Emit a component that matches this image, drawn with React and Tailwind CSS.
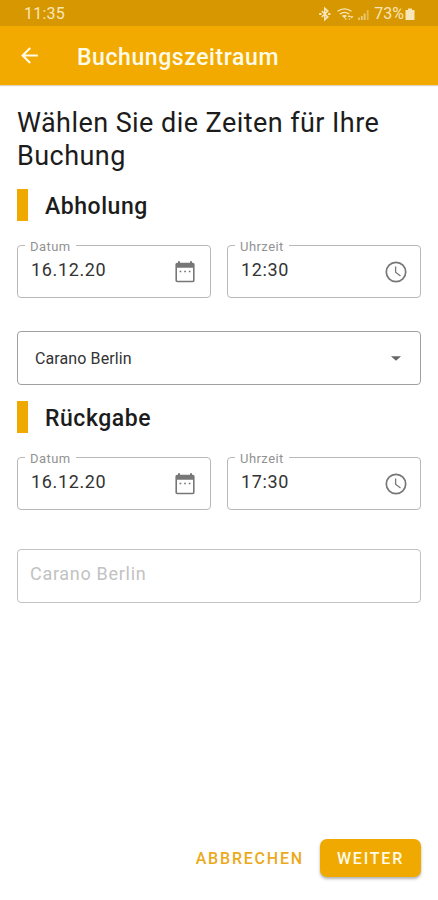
const INK = 'text-[#333]';

function BackArrow() {
  return (
    <svg className="h-[25px] w-[25px] fill-[#fffbe9]" viewBox="0 0 24 24">
      <path d="M20 11H7.83l5.59-5.59L12 4l-8 8 8 8 1.41-1.41L7.83 13H20v-2z" />
    </svg>
  );
}

function Calendar() {
  return (
    <svg className="mr-[1px] h-[24px] w-[22px]" viewBox="0 0 22 24">
      <path fill="#777" fillRule="evenodd" d="M4 1.200h2v1.500h10V1.200h2v1.500h.8A1.800 1.800 0 0 1 20.600 4.500v16a1.800 1.800 0 0 1-1.800 1.800H3.200a1.800 1.800 0 0 1-1.800-1.800v-16a1.800 1.800 0 0 1 1.800-1.800H4zM3 7.800v12.500a.4.400 0 0 0 .4.4h15.200a.4.400 0 0 0 .4-.4V7.800z" />
      <path fill="#777" d="M5.600 10.700h1.700v1.500H5.600zM10.200 10.700h1.700v1.500h-1.700zM14.800 10.700h1.700v1.500h-1.700z" />
    </svg>
  );
}

function Clock() {
  return (
    <svg className="-mr-[1px] h-[24px] w-[24px]" viewBox="0 0 24 24" fill="none" stroke="#777" strokeWidth="1.700">
      <circle cx="12" cy="12" r="9.700" />
      <path d="M11.600 6.500v5.700l4.900 3.700" strokeWidth="1.300" />
    </svg>
  );
}

function StatusIcons() {
  return (
    <svg className="h-[16px] w-[54px]" viewBox="0 0 54 16" fill="none" stroke="#f8e6b8">
      <path strokeWidth="1.600" d="M3.800 5l6 6-3 2.700V2.300l3 2.700-6 6" />
      <path strokeWidth="2" d="M1.200 8h2.300M10.100 8h2.300" />
      <path strokeWidth="1.300" d="M19.500 5.300q7-5 14 0M21.800 8q4.700-3.300 9.400 0" />
      <path fill="#f8e6b8" stroke="none" d="M23.800 9.800q2.700-1.500 5.200 0L26.500 12.300zM29.500 11l1.600-2 1.600 2zM32 10.200h3.500l-1.700 2.200zM26.500 12.500h2.500l-1.200 1.500zM30.500 12.500h2l-1 1.500z" />
      <path strokeWidth="1.800" opacity=".65" d="M41 14v-2.500M43.800 14v-4M46.600 14V7.500" />
      <path strokeWidth="1.800" opacity=".45" d="M49.700 14V4" />
    </svg>
  );
}

function Field({ label, value, icon }) {
  return (
    <fieldset className="h-[59px] min-w-0 flex-1 rounded-[4px] border border-[#b8b8b8] pl-[13px] pr-[13px]">
      <legend className="ml-[-6px] h-[12px] pl-[5px] pr-[5px] text-[13px] leading-[16px] tracking-[0.45px] text-[#929292]">{label}</legend>
      <div className="flex items-start justify-between">
        <span className={`mt-[7px] text-[18px] leading-[24px] tracking-[0.65px] ${INK}`}>{value}</span>
        <span className="mt-[9px]">{icon}</span>
      </div>
    </fieldset>
  );
}

function Section({ title, date, time, children }) {
  return (
    <section className="h-[212px]">
      <div className="flex h-[32px] items-center gap-[17px]">
        <span className="h-[32px] w-[11px] bg-[#f0a900]" />
        <h2 className="pt-[4px] text-[23px] font-medium leading-[32px] tracking-[0.55px] text-[#1c1c1c]">{title}</h2>
      </div>
      <div className="mt-[18px] flex gap-[16px]">
        <Field label="Datum" value={date} icon={<Calendar />} />
        <Field label="Uhrzeit" value={time} icon={<Clock />} />
      </div>
      {children}
    </section>
  );
}

export default function App() {
  return (
    <div className="flex h-[900px] w-[438px] flex-col bg-white font-['Roboto',sans-serif]">
      <div className="flex h-[26px] items-center bg-[#d79700] pl-[24px] pr-[22px] pt-[2px] text-[#f8e6b8]">
        <span className="text-[16px] leading-[20px] tracking-[0.200px]">11:35</span>
        <span className="ml-auto"><StatusIcons /></span>
        <span className="ml-[2px] text-[16px] leading-[20px]">73%</span>
        <svg className="ml-[1px] mr-[1px] h-[14px] w-[10px] fill-[#f8e6b8]" viewBox="0 0 10 14">
          <path d="M3 1.500h4V3h2.500v10h-9V3H3z" />
        </svg>
      </div>
      <header className="flex h-[59px] items-center bg-[#f3aa00] pl-[17px] shadow-[0_1px_1px_rgba(120,80,0,0.25)]">
        <BackArrow />
        <h1 className="ml-[35px] mt-[4px] text-[23px] font-medium leading-[30px] tracking-[0.58px] text-[#fffbe9]">Buchungszeitraum</h1>
      </header>
      <main className="flex flex-1 flex-col pl-[17px] pr-[17px] pt-[22px]">
        <p className="h-[82px] whitespace-nowrap text-[27px] leading-[33px] tracking-[0.44px] text-[#1c1c1c]">Wählen Sie die Zeiten für Ihre<br />Buchung</p>
        <Section title="Abholung" date="16.12.20" time="12:30">
          <div className="mt-[33px] flex h-[54px] items-center justify-between rounded-[4px] border border-[#a0a0a0] pl-[17px] pr-[19px] pt-[2px]">
            <span className={`text-[16px] tracking-[0.100px] ${INK}`}>Carano Berlin</span>
            <svg className="mb-[2px] h-[5px] w-[10px] fill-[#666]" viewBox="0 0 11 5"><path d="M0 0h11L5.500 5z" /></svg>
          </div>
        </Section>
        <Section title="Rückgabe" date="16.12.20" time="17:30">
          <div className="mt-[39px] flex h-[54px] items-center rounded-[4px] border border-[#c2c2c2] pb-[5px] pl-[12px]">
            <span className="text-[18px] tracking-[0.700px] text-[#c2c2c2]">Carano Berlin</span>
          </div>
        </Section>
        <div className="mb-[23px] mt-auto flex items-center justify-end">
          <button className="mr-[16px] pt-[2px] text-[16px] font-medium tracking-[1.800px] text-[#eba91c]">ABBRECHEN</button>
          <button className="h-[38px] w-[101px] rounded-[7px] bg-[#f0a900] pt-[2px] text-[16px] font-medium tracking-[1.800px] text-[#fffbe9] shadow-[0_2px_3px_rgba(0,0,0,0.3)]">WEITER</button>
        </div>
      </main>
    </div>
  );
}
